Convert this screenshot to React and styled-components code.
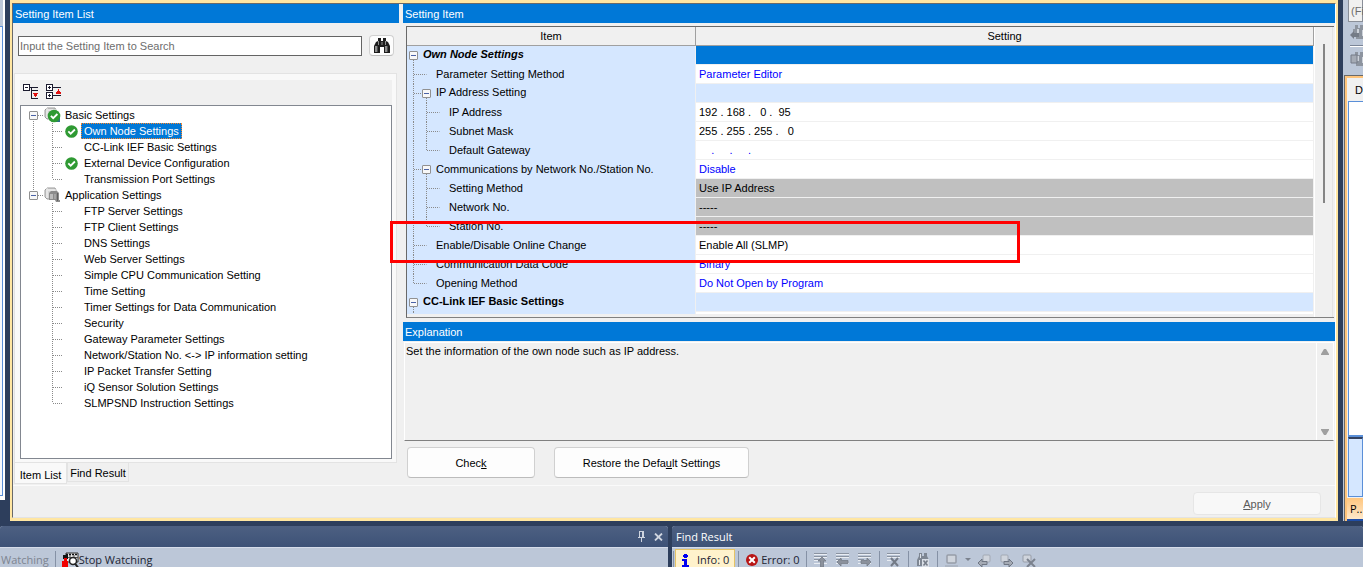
import React, { useState } from "react";
import styled, { createGlobalStyle, css } from "styled-components";

const GlobalStyle = createGlobalStyle`
  * {
    box-sizing: border-box;
  }
  body {
    margin: 0;
    background-color: #2d3e5c;
    color: #000;
    font: 11px/16px "Liberation Sans", Arial, sans-serif;
  }
  button, input {
    font: inherit;
    color: inherit;
    margin: 0;
    padding: 0;
  }
  svg {
    display: block;
    flex: none;
  }
`;

const Page = styled.div`
  display: flex;
  flex-direction: column;
  height: 100vh;
  overflow: hidden;
`;

const Workspace = styled.div`
  display: flex;
  flex: none;
  gap: 5px;
  padding-bottom: 5px;
`;

/* left and right neighbours of the window */
const LeftEdge = styled.div`
  width: 5px;
  flex: none;
  margin-bottom: 21px;
  background-color: #fff;
  border-right: 2px solid #fff;
  border-bottom: 4px solid #fff;
  display: flex;
  flex-direction: column;
  .Strip {
    height: 26px;
    background-color: #bcc7d8;
  }
  .Body {
    flex: 1;
    background-color: #f7f9fd;
    border: 1px solid #5a8fd8;
    border-left: none;
  }
`;

const RightEdge = styled.div`
  width: 20px;
  flex: none;
  overflow: hidden;
  background-color: #bcc7d8;
  display: flex;
  flex-direction: column;
  white-space: nowrap;
  .Filter {
    height: 22px;
    margin-left: 5px;
    padding: 3px 0 0 2px;
    background-color: #f0f0f0;
    border: 1px solid #8a8f99;
    border-top: none;
    color: #6d6d6d;
  }
  .Tools {
    height: 53px;
    padding: 3px 0 0 7px;
    display: flex;
    flex-direction: column;
    gap: 5px;
    hr {
      width: 100%;
      margin: 0;
      border: none;
      border-top: 1px solid #7a8496;
      border-bottom: 1px solid #fff;
    }
  }
  .Panel {
    flex: 1;
    border-left: 2px solid #ffc47a;
    border-top: 2px solid #ffc47a;
    outline: 1px solid #696969;
    margin: 1px 0 0 2px;
    background-color: #f0f0f0;
    display: flex;
    flex-direction: column;
  }
  .Heading {
    height: 23px;
    padding: 4px 0 0 8px;
  }
  .Sheet {
    flex: 1;
    margin-left: 1px;
    border-left: 1px solid #5a8fd8;
    border-top: 1px solid #5a8fd8;
    border-bottom: 2px solid #5a8fd8;
    background-color: #fff;
  }
  .Preview {
    height: 60px;
    margin: 0 0 1px 1px;
    border: 1px solid #5a8fd8;
    border-top: 2px solid #33415f;
    background-color: #d5e7ff;
  }
  .PageTab {
    height: 23px;
    padding: 0 0 0 3px;
    border: none;
    border-bottom: 2px solid #1f4ea8;
    background: linear-gradient(#ffc67e, #ffe9cb);
    text-align: left;
    font: 11px/16px "Open Sans", "Noto Sans", sans-serif;
  }
`;

const Window = styled.div`
  position: relative;
  flex: 1;
  min-width: 0;
  border: 2px solid #ffe6a2;
  border-top-width: 3px;
  border-bottom-width: 3px;
  background-color: #f0f0f0;
`;

const Inner = styled.div`
  border: 1px solid #696969;
  border-right-color: #fff;
  border-bottom-color: #e3e3e3;
`;

const Columns = styled.div`
  display: flex;
  gap: 4px;
  height: 482px;
  border-bottom: 1px solid #fafafa;
`;

const LeftColumn = styled.section`
  width: 386px;
  flex: none;
  display: flex;
  flex-direction: column;
`;

const RightColumn = styled.section`
  flex: 1;
  min-width: 0;
  display: flex;
  flex-direction: column;
`;

const TitleBar = styled.h2`
  flex: none;
  margin: 0;
  height: 19px;
  padding: 2px 2px 0;
  background-color: #0078d7;
  color: #fff;
  font-size: 11px;
  font-weight: normal;
`;

const SearchRow = styled.div`
  display: flex;
  gap: 7px;
  padding: 12px 5px 17px;
  align-items: center;
  input {
    flex: 1;
    min-width: 0;
    height: 20px;
    padding: 0 1px;
    border: 1px solid #646464;
    background-color: #fff;
    outline: none;
  }
  input::placeholder {
    color: #6d6d6d;
    opacity: 1;
  }
`;

const PushButton = styled.button`
  height: ${(props) => props.$height || 31}px;
  min-width: ${(props) => props.$width || 128}px;
  padding: 0;
  display: flex;
  align-items: center;
  justify-content: center;
  white-space: pre;
  border: 1px solid #d0d0d0;
  border-bottom-color: #bcbcbc;
  border-radius: 4px;
  background-color: #fdfdfd;
  &:disabled {
    border-color: #e6e6e6;
    background-color: #f8f8f8;
    color: #5a5a5a;
  }
`;

const TabPanel = styled.div`
  flex: 1;
  display: flex;
  flex-direction: column;
  margin: 0 2px 0 1px;
  padding: 6px 4px 3px 5px;
  background-color: #f9f9f9;
  border: 1px solid #e3e3e3;
`;

const TreeTools = styled.div`
  height: 25px;
  padding: 4px 3px;
  display: flex;
  gap: 7px;
  background-color: #f0f0f0;
  button {
    width: 16px;
    height: 16px;
    border: none;
    background: none;
  }
`;

const TreeBox = styled.ul`
  flex: 1;
  margin: 0;
  padding: 1px 0 0 3px;
  list-style: none;
  background-color: #fff;
  border: 1px solid #828790;
`;

const TreeRow = styled.li`
  height: 16px;
  display: flex;
  align-items: center;
  white-space: nowrap;
`;

const TreeLabel = styled.span`
  height: 16px;
  line-height: 14px;
  padding: 0 2px;
  border: 1px solid transparent;
  ${(props) =>
    props.$selected &&
    css`
      color: #fff;
      background-color: #0078d7;
      border: 1px dotted #ff8728;
    `}
`;

const dotsDown = "repeating-linear-gradient(to bottom, #8a8a8a 0 1px, transparent 1px 2px)";
const dotsAcross = "repeating-linear-gradient(to right, #8a8a8a 0 1px, transparent 1px 2px)";

const downSize = { full: "1px 100%", top: "1px 50%", bottom: "1px 50%", none: "0 0" };
const acrossSize = { right: "50% 1px", left: "50% 1px", none: "0 0" };

/* one square of the dotted tree lines */
const Guide = styled.span`
  flex: none;
  align-self: stretch;
  width: ${(props) => props.$width}px;
  display: flex;
  align-items: center;
  justify-content: center;
  background-image: ${dotsDown}, ${dotsAcross};
  background-repeat: no-repeat;
  background-size: ${(props) => downSize[props.$down || "none"]},
    ${(props) => acrossSize[props.$across || "none"]};
  background-position: center ${(props) => (props.$down === "bottom" ? "bottom" : "top")},
    ${(props) => (props.$across === "left" ? "left" : "right")} center;
`;

const Toggle = styled.button`
  width: 9px;
  height: 9px;
  flex: none;
  border: 1px solid #919191;
  border-radius: 1px;
  background: linear-gradient(#4b63a7, #4b63a7) center / 5px 1px no-repeat, #f8f8f8;
`;

const TabStrip = styled.div`
  display: flex;
  height: 22px;
  flex: none;
  align-items: flex-start;
  padding-left: 1px;
`;

const Tab = styled.button`
  height: ${(props) => (props.$active ? 21 : 19)}px;
  width: ${(props) => (props.$active ? 53 : 62)}px;
  padding-top: ${(props) => (props.$active ? 3 : 1)}px;
  border: 1px solid #e3e3e3;
  border-top: none;
  background-color: ${(props) => (props.$active ? "#f9f9f9" : "#f0f0f0")};
`;

const GridFrame = styled.div`
  display: flex;
  flex: none;
  height: 292px;
  margin: 3px 1px 4px 3px;
  padding-right: 1px;
  overflow: hidden;
  border-top: 1px solid #696969;
  border-left: 1px solid #696969;
  border-bottom: 1px solid #808080;
  background-color: #f0f0f0;
`;

const GridClip = styled.div`
  flex: 1;
  min-width: 0;
  height: 287px;
  overflow: hidden;
`;

const SettingTable = styled.table`
  width: 100%;
  table-layout: fixed;
  border-collapse: separate;
  border-spacing: 0;
  th {
    height: 19px;
    padding: 0;
    font-weight: normal;
    line-height: 16px;
    background-color: #f0f0f0;
    border-right: 1px solid #a0a0a0;
    border-bottom: 1px solid #a0a0a0;
  }
  th:first-child {
    width: 289px;
  }
`;

const ItemCell = styled.td`
  height: 19px;
  padding: 0;
  background-color: #d5e7ff;
  border-right: 1px solid #f0f0f0;
`;

const ItemLine = styled.div`
  height: 19px;
  display: flex;
  align-items: center;
  white-space: nowrap;
  font-weight: ${(props) => (props.$heading ? "bold" : "normal")};
  font-style: ${(props) => (props.$italic ? "italic" : "normal")};
  .Name {
    padding-left: 3px;
    padding-bottom: ${(props) => (props.$raised ? 3 : 1)}px;
  }
`;

const valueColors = {
  active: "#0078d7",
  group: "#d5e7ff",
  off: "#c0c0c0",
};

const ValueCell = styled.td`
  height: 19px;
  padding: 0 3px;
  white-space: pre;
  line-height: 16px;
  color: ${(props) => (props.$preset ? "#0000ff" : "#000")};
  background-color: ${(props) => valueColors[props.$kind] || "#fff"};
  border-right: 1px solid #f0f0f0;
  border-bottom: 1px solid #f0f0f0;
`;

const GridScroll = styled.div`
  width: 19px;
  flex: none;
  border-left: 1px solid #fff;
  border-right: 1px solid #e3e3e3;
  display: flex;
  justify-content: center;
  padding-top: 17px;
  span {
    width: 2px;
    height: 159px;
    background-color: #858585;
  }
`;

const ExplainBox = styled.div`
  flex: none;
  display: flex;
  justify-content: space-between;
  height: 99px;
  margin: 1px 1px 0;
  border: 1px solid #fff;
  border-bottom: 1px solid #808080;
  p {
    margin: 0;
    padding: 0 1px;
  }
`;

const ExplainScroll = styled.div`
  width: 17px;
  border-left: 1px solid #fff;
  display: flex;
  flex-direction: column;
  align-items: center;
  justify-content: space-between;
  padding: 6px 0 5px;
`;

const ButtonRow = styled.div`
  display: flex;
  gap: 19px;
  padding: 6px 4px;
`;

const Footer = styled.div`
  height: 31px;
  display: flex;
  justify-content: flex-end;
  padding: 6px 14px 2px;
`;

const RedMark = styled.div`
  position: absolute;
  left: 378px;
  top: 218px;
  width: 630px;
  height: 42px;
  border: 3px solid #ff0000;
  pointer-events: none;
`;

const Docks = styled.div`
  display: flex;
  flex: 1;
  gap: 4px;
  min-height: 0;
  font: 11px/14px "Open Sans", "Noto Sans", sans-serif;
`;

const Dock = styled.section`
  flex: ${(props) => props.$grow};
  min-width: 0;
  display: flex;
  flex-direction: column;
  overflow: hidden;
  border-radius: 3px 3px 0 0;
  background-color: #bcc7d8;
  white-space: nowrap;
`;

const DockTitle = styled.header`
  flex: none;
  height: 21px;
  padding: 0 5px 0 4px;
  display: flex;
  align-items: center;
  gap: 8px;
  color: #fff;
  background: linear-gradient(#4d6082, #3d5277);
  h3 {
    flex: 1;
    margin: 0;
    font-size: 11px;
    font-weight: normal;
  }
  button {
    border: none;
    background: none;
  }
`;

const DockTools = styled.div`
  flex: 1;
  display: flex;
  align-items: flex-start;
  padding: 1px 4px 0 0;
  border-top: 1px solid #d5dcea;
`;

const ToolButton = styled.button`
  flex: none;
  height: 22px;
  display: flex;
  align-items: center;
  gap: ${(props) => props.$gap || 0}px;
  padding: 0 ${(props) => props.$pad || 0}px;
  border: 1px solid ${(props) => (props.$pressed ? "#e5c365" : "transparent")};
  background-color: ${(props) => (props.$pressed ? "#fff2cc" : "transparent")};
  color: #1b2433;
  &:disabled {
    color: #7d8490;
  }
`;

const Separator = styled.span`
  width: 1px;
  height: 24px;
  flex: none;
  margin: 2px ${(props) => props.$space || 3}px 0;
  background-color: #8591a5;
`;

const Binoculars = () => (
  <svg width="18" height="16" viewBox="0 0 18 16" aria-hidden="true">
    <path d="M5 0h3v3h2V0h3v3l2 1 2 4v7h-6V9H7v6H1V8l2-4 2-1z" fill="#1c1c1c" />
    <path d="M2 8h2v6H2zM12 8h2v6h-2zM5 3h1v4H5zM12 3h1v4h-1z" fill="#8d8d8d" />
    <path d="M8 4h2v3H8z" fill="#555" />
    <path d="M4 8h1v6H4zM14 8h1v6h-1z" fill="#4c4c4c" />
  </svg>
);

const CollapseIcon = () => (
  <svg width="16" height="16" viewBox="0 0 16 16" shapeRendering="crispEdges" aria-hidden="true">
    <path d="M.5.5h6v6h-6zM2 3.500h3" fill="#fff" stroke="#1a1a2e" />
    <path d="M7 3.500h8M8.500 4v11M9 14.500h6M9 6.500h6" fill="none" stroke="#1a1a2e" />
    <path d="M10 9h5v1h-1v2h-1v1h-1v-1h-1v-2h-1z" fill="#e01010" />
  </svg>
);

const ExpandIcon = () => (
  <svg width="16" height="16" viewBox="0 0 16 16" shapeRendering="crispEdges" aria-hidden="true">
    <path d="M.5.5h6v6h-6zM.5 8.500h6v6h-6z" fill="#fff" stroke="#1a1a2e" />
    <path
      d="M2 3.500h3M3.500 2v3M7 3.500h8M2 11.500h3M3.500 10v3M7 11.500h8"
      fill="none"
      stroke="#1a1a2e"
    />
    <path d="M12 5h1v2h1v1h1v2h-5V8h1V7h1z" fill="#e01010" />
  </svg>
);

const CheckMark = () => (
  <svg width="13" height="14" viewBox="0 0 13 14" aria-hidden="true">
    <circle cx="6.500" cy="7.500" r="6.300" fill="#2f9a33" />
    <path d="M3.300 7.300l2.400 2.400 4.200-4.200" fill="none" stroke="#fff" strokeWidth="1.800" />
  </svg>
);

const StackIcon = ({ checked }) => (
  <svg width="17" height="16" viewBox="0 0 17 16" aria-hidden="true">
    <path d="M1 3l2-2h8l1 2v9H3l-2-2z" fill="#d4d4d4" stroke="#9a9a9a" />
    <path d="M3 1v10M4 3h8" stroke="#f7f7f7" />
    {checked ? (
      <g>
        <path d="M11 9h5v6h-5z" fill="#2f6f8a" />
        <circle cx="10" cy="9" r="6.300" fill="#2f9a33" />
        <path d="M6.900 8.800l2.300 2.400 4.200-4.200" fill="none" stroke="#fff" strokeWidth="1.800" />
      </g>
    ) : (
      <g>
        <path d="M5 6l2-2h6l2 2v7h1v2h-4l-1-2H5z" fill="#8c8c8c" />
        <path d="M6 7h3v5H6z" fill="#bdbdbd" />
        <path d="M10 7h2v5h-2z" fill="#a5a5a5" />
        <path d="M13.500 6v8" stroke="#606060" />
      </g>
    )}
  </svg>
);

const StopWatchIcon = () => (
  <svg width="17" height="16" viewBox="0 0 17 16" aria-hidden="true">
    <path d="M4 1h12v9H4z" fill="#e8e8e8" stroke="#333" />
    <path d="M4 2.500h12" stroke="#111" strokeWidth="1.500" strokeDasharray="2 1" />
    <path d="M4 5.500h12M8 3v4M12 3v4" stroke="#555" />
    <path d="M1 3h5v4H1z" fill="#111" />
    <path d="M2 6h3v3H2z" fill="#f00000" />
    <path d="M0 9h6v7H0z" fill="#f00000" />
    <circle cx="11" cy="9" r="3.500" fill="#fff" stroke="#222" strokeWidth="1.500" />
    <path d="M13 11.500l3 4" stroke="#222" strokeWidth="2" />
  </svg>
);

const PinIcon = () => (
  <svg width="9" height="11" viewBox="0 0 9 11" shapeRendering="crispEdges" aria-hidden="true">
    <path d="M2 0h5v6h1v1H5v4H4V7H1V6h1z" fill="#ced4df" />
    <path d="M3 1h2v5H3z" fill="#46597c" />
  </svg>
);

const CloseIcon = () => (
  <svg width="9" height="8" viewBox="0 0 9 8" aria-hidden="true">
    <path d="M1 .5l7 7M8 .5l-7 7" stroke="#ced4df" strokeWidth="1.800" />
  </svg>
);

const InfoIcon = () => (
  <svg width="9" height="13" viewBox="0 0 9 13" shapeRendering="crispEdges" aria-hidden="true">
    <path d="M3 0h3v1h1v2H6v1H3V3H2V1h1zM1 5h5v6h2v2H1v-2h2V7H1z" fill="#0000f0" />
  </svg>
);

const ErrorIcon = () => (
  <svg width="12" height="12" viewBox="0 0 12 12" aria-hidden="true">
    <circle cx="6" cy="6" r="6" fill="#b81414" />
    <path d="M3.200 3.200l5.600 5.600M8.800 3.200L3.200 8.800" stroke="#fff" strokeWidth="2" />
  </svg>
);

const listArrows = {
  up: "M9 5l4 4h-2.500v6h-3V9H5z",
  left: "M2 10l4-4v2.500h7v3H6V14z",
  right: "M14 10l-4-4v2.500H4v3h6V14z",
};

const ListArrow = ({ to }) => (
  <svg width="16" height="16" viewBox="0 0 16 16" aria-hidden="true">
    <path d="M1 2.500h13M1 5.500h13M1 8.500h6M1 11.500h13" stroke="#e9edf3" />
    <path d="M1 1.500h13M1 4.500h13M1 7.500h6" stroke="#8a93a1" />
    <path d={listArrows[to]} fill="#8b919c" stroke="#747b87" strokeWidth=".8" />
  </svg>
);

const ListDelete = () => (
  <svg width="16" height="16" viewBox="0 0 16 16" aria-hidden="true">
    <path d="M1 2.500h13M1 5.500h13M1 8.500h4" stroke="#e9edf3" />
    <path d="M1 1.500h13M1 4.500h13" stroke="#8a93a1" />
    <path d="M5 6l7 8M12 6l-7 8" stroke="#747b87" strokeWidth="2" />
  </svg>
);

const FindClear = () => (
  <svg width="16" height="16" viewBox="0 0 16 16" aria-hidden="true">
    <path d="M4 1h3v3h2V1h3v3l2 4v6H9V9H7v5H2V8l2-4z" fill="#7e8692" />
    <path d="M4 8h1v5H4zM5 2h1v4H5z" fill="#dfe3ea" />
    <path d="M7 7h7v8H7z" fill="#d9dee6" />
    <path d="M8.500 8.500l4 5M12.500 8.500l-4 5" stroke="#747b87" strokeWidth="1.500" />
  </svg>
);

const BookmarkIcon = ({ to }) => (
  <svg width="16" height="16" viewBox="0 0 16 16" aria-hidden="true">
    {to === "none" && (
      <g>
        <rect x="3" y="3" width="9" height="8" rx="1" fill="#cfd4dc" stroke="#979da8" strokeWidth="1.500" />
        <path d="M1 14h13" stroke="#adb6c4" strokeWidth="2" />
      </g>
    )}
    {to === "left" && (
      <g>
        <rect x="6" y="3" width="7" height="7" rx="1" fill="#cfd4dc" stroke="#a3a9b4" />
        <path d="M1 11l4-4v2.500h5v3H5V15z" fill="#a5abb5" stroke="#6f7683" />
      </g>
    )}
    {to === "right" && (
      <g>
        <rect x="2" y="3" width="7" height="7" rx="1" fill="#cfd4dc" stroke="#a3a9b4" />
        <path d="M14 11l-4-4v2.500H5v3h5V15z" fill="#a5abb5" stroke="#6f7683" />
      </g>
    )}
    {to === "clear" && (
      <g>
        <rect x="2" y="3" width="8" height="7" rx="1" fill="#cfd4dc" stroke="#979da8" />
        <path d="M6 7l8 8M14 7l-8 8" stroke="#7b828e" strokeWidth="2" />
      </g>
    )}
  </svg>
);

const SideFind = ({ back }) => (
  <svg width="16" height="15" viewBox="0 0 16 15" aria-hidden="true">
    <path d="M5 0h3v3h2V0h3v4l3 3v7H6V8H3V4h2z" fill="#8d949f" />
    <path d="M7 4h2v5H7zM12 5h2v6h-2z" fill="#cdd2da" />
    {back ? <path d="M0 10l4-4v2h5v4H4v2z" fill="#747b87" /> : <path d="M1 3h6v8H1z" fill="#a5abb5" stroke="#747b87" />}
  </svg>
);

const ScrollArrow = ({ down }) => (
  <svg width="8" height="6" viewBox="0 0 8 6" aria-hidden="true">
    <path d={down ? "M0 0h8v1L5 6H3L0 1z" : "M3 0h2l3 5v1H0V5z"} fill="#9f9f9f" />
  </svg>
);

const basicItems = [
  { name: "Own Node Settings", checked: true },
  { name: "CC-Link IEF Basic Settings" },
  { name: "External Device Configuration", checked: true },
  { name: "Transmission Port Settings" },
];

const applicationItems = [
  { name: "FTP Server Settings" },
  { name: "FTP Client Settings" },
  { name: "DNS Settings" },
  { name: "Web Server Settings" },
  { name: "Simple CPU Communication Setting" },
  { name: "Time Setting" },
  { name: "Timer Settings for Data Communication" },
  { name: "Security" },
  { name: "Gateway Parameter Settings" },
  { name: "Network/Station No. <-> IP information setting" },
  { name: "IP Packet Transfer Setting" },
  { name: "iQ Sensor Solution Settings" },
  { name: "SLMPSND Instruction Settings" },
];

const settings = [
  { level: 0, name: "Own Node Settings", value: "", kind: "active", toggle: true, italic: true },
  { level: 1, name: "Parameter Setting Method", value: "Parameter Editor", preset: true },
  { level: 1, name: "IP Address Setting", value: "", kind: "group", toggle: true },
  { level: 2, name: "IP Address", value: "192 . 168 .   0 .  95" },
  { level: 2, name: "Subnet Mask", value: "255 . 255 . 255 .   0" },
  { level: 2, name: "Default Gateway", value: "    .     .     .", preset: true, last: true },
  { level: 1, name: "Communications by Network No./Station No.", value: "Disable", preset: true, toggle: true },
  { level: 2, name: "Setting Method", value: "Use IP Address", kind: "off" },
  { level: 2, name: "Network No.", value: "-----", kind: "off" },
  { level: 2, name: "Station No.", value: "-----", kind: "off", last: true },
  { level: 1, name: "Enable/Disable Online Change", value: "Enable All (SLMP)" },
  { level: 1, name: "Communication Data Code", value: "Binary", preset: true },
  { level: 1, name: "Opening Method", value: "Do Not Open by Program", preset: true, last: true },
  { level: 0, name: "CC-Link IEF Basic Settings", value: "", kind: "group", toggle: true },
  { level: 1, name: "", value: "" },
];

function TreeGroup({ name, items, checked, first, selected, onSelect }) {
  return (
    <>
      <TreeRow>
        <Guide $width={19} $down={first ? "bottom" : "top"} $across="right">
          <Toggle aria-label={`Collapse ${name}`} />
        </Guide>
        <Guide $width={19}>
          <StackIcon checked={checked} />
        </Guide>
        <TreeLabel>{name}</TreeLabel>
      </TreeRow>
      {items.map((item, i) => (
        <TreeRow key={item.name} onClick={() => onSelect(item.name)}>
          <Guide $width={19} $down={first ? "full" : "none"} />
          <Guide $width={19} $down={i === items.length - 1 ? "top" : "full"} $across="right" />
          <Guide $width={19}>{item.checked && <CheckMark />}</Guide>
          <TreeLabel $selected={selected === item.name}>{item.name}</TreeLabel>
        </TreeRow>
      ))}
    </>
  );
}

function SettingRow({ row }) {
  const toggle = row.toggle && <Toggle aria-label={`Collapse ${row.name}`} />;
  return (
    <tr>
      <ItemCell>
        <ItemLine $heading={row.level === 0} $italic={row.italic} $raised={row.kind === "active" || row.kind === "group"}>
          {row.level === 0 && (
            <Guide $width={13} $down="bottom">
              {toggle}
            </Guide>
          )}
          {row.level === 1 && (
            <>
              <Guide $width={13} $down={row.last ? "top" : "full"} $across="right" />
              <Guide $width={13} $down={row.toggle ? "bottom" : "none"} $across="left">
                {toggle}
              </Guide>
            </>
          )}
          {row.level === 2 && (
            <>
              <Guide $width={13} $down="full" />
              <Guide $width={13} $down={row.last ? "top" : "full"} $across="right" />
              <Guide $width={13} $across="left" />
            </>
          )}
          <span className="Name">{row.name}</span>
        </ItemLine>
      </ItemCell>
      <ValueCell $kind={row.kind} $preset={row.preset}>
        {row.value}
      </ValueCell>
    </tr>
  );
}

function App() {
  const [selected, setSelected] = useState("Own Node Settings");

  return (
    <Page>
      <GlobalStyle />
      <Workspace>
        <LeftEdge>
          <div className="Strip"></div>
          <div className="Body"></div>
        </LeftEdge>
        <Window>
          <Inner>
            <Columns>
              <LeftColumn>
                <TitleBar>Setting Item List</TitleBar>
                <SearchRow>
                  <input aria-label="Search setting items" placeholder="Input the Setting Item to Search" />
                  <PushButton $width={25} $height={21} aria-label="Find">
                    <Binoculars />
                  </PushButton>
                </SearchRow>
                <TabPanel>
                  <TreeTools>
                    <button aria-label="Collapse all">
                      <CollapseIcon />
                    </button>
                    <button aria-label="Expand all">
                      <ExpandIcon />
                    </button>
                  </TreeTools>
                  <TreeBox>
                    <TreeGroup name="Basic Settings" items={basicItems} checked first selected={selected} onSelect={setSelected} />
                    <TreeGroup name="Application Settings" items={applicationItems} selected={selected} onSelect={setSelected} />
                  </TreeBox>
                </TabPanel>
                <TabStrip>
                  <Tab $active>Item List</Tab>
                  <Tab>Find Result</Tab>
                </TabStrip>
              </LeftColumn>
              <RightColumn>
                <TitleBar>Setting Item</TitleBar>
                <GridFrame>
                  <GridClip>
                    <SettingTable>
                      <thead>
                        <tr>
                          <th>Item</th>
                          <th>Setting</th>
                        </tr>
                      </thead>
                      <tbody>
                        {settings.map((row, i) => (
                          <SettingRow key={i} row={row} />
                        ))}
                      </tbody>
                    </SettingTable>
                  </GridClip>
                  <GridScroll>
                    <span></span>
                  </GridScroll>
                </GridFrame>
                <TitleBar>Explanation</TitleBar>
                <ExplainBox>
                  <p>Set the information of the own node such as IP address.</p>
                  <ExplainScroll>
                    <ScrollArrow />
                    <ScrollArrow down />
                  </ExplainScroll>
                </ExplainBox>
                <ButtonRow>
                  <PushButton>
                    Chec<u>k</u>
                  </PushButton>
                  <PushButton $width={195}>
                    Restore the Defa<u>u</u>lt Settings
                  </PushButton>
                </ButtonRow>
              </RightColumn>
            </Columns>
            <Footer>
              <PushButton $height={23} disabled>
                <u>A</u>pply
              </PushButton>
            </Footer>
          </Inner>
          <RedMark />
        </Window>
        <RightEdge>
          <div className="Filter">(Fi</div>
          <div className="Tools">
            <SideFind back />
            <hr />
            <SideFind />
          </div>
          <div className="Panel">
            <div className="Heading">D</div>
            <div className="Sheet"></div>
            <div className="Preview"></div>
            <button className="PageTab">P..</button>
          </div>
        </RightEdge>
      </Workspace>
      <Docks>
        <Dock $grow="668 1 0">
          <DockTitle>
            <h3></h3>
            <button aria-label="Pin">
              <PinIcon />
            </button>
            <button aria-label="Close">
              <CloseIcon />
            </button>
          </DockTitle>
          <DockTools>
            <ToolButton disabled>Watching</ToolButton>
            <Separator $space={5} />
            <ToolButton>
              <StopWatchIcon />
              Stop Watching
            </ToolButton>
          </DockTools>
        </Dock>
        <Dock $grow="691 1 0">
          <DockTitle>
            <h3>Find Result</h3>
          </DockTitle>
          <DockTools>
            <Separator $space={1} />
            <ToolButton $pressed $pad={5} $gap={7}>
              <InfoIcon />
              Info: 0
            </ToolButton>
            <Separator />
            <ToolButton $pad={3} $gap={3}>
              <ErrorIcon />
              Error: 0
            </ToolButton>
            <Separator />
            <ToolButton $pad={2} disabled aria-label="Previous group">
              <ListArrow to="up" />
            </ToolButton>
            <ToolButton $pad={2} disabled aria-label="Previous result">
              <ListArrow to="left" />
            </ToolButton>
            <ToolButton $pad={2} disabled aria-label="Next result">
              <ListArrow to="right" />
            </ToolButton>
            <Separator />
            <ToolButton $pad={2} disabled aria-label="Delete result">
              <ListDelete />
            </ToolButton>
            <Separator />
            <ToolButton $pad={2} disabled aria-label="Clear results">
              <FindClear />
            </ToolButton>
            <Separator />
            <ToolButton $pad={2} $gap={5} disabled aria-label="Bookmark">
              <BookmarkIcon to="none" />
              <svg width="6" height="4" viewBox="0 0 6 4" aria-hidden="true">
                <path d="M0 0h6L3 3z" fill="#7b828e" />
              </svg>
            </ToolButton>
            <ToolButton $pad={2} disabled aria-label="Previous bookmark">
              <BookmarkIcon to="left" />
            </ToolButton>
            <ToolButton $pad={2} disabled aria-label="Next bookmark">
              <BookmarkIcon to="right" />
            </ToolButton>
            <ToolButton $pad={2} disabled aria-label="Clear bookmarks">
              <BookmarkIcon to="clear" />
            </ToolButton>
          </DockTools>
        </Dock>
      </Docks>
    </Page>
  );
}

export default App;
